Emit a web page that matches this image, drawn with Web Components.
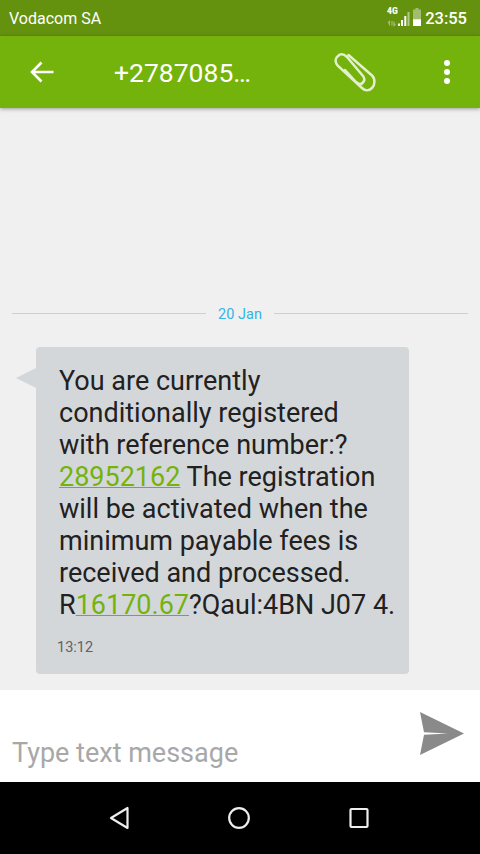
<!DOCTYPE html>
<html>
<head>
<meta charset="utf-8">
<style>
    html, body { margin: 0; padding: 0; height: 100%; }
    body { font-family: Roboto, "Liberation Sans", sans-serif; background: #f0f0f0; overflow: hidden; }
    sms-screen { height: 854px; }
</style>
</head>
<body>
<sms-screen>
    <status-bar slot="status" carrier="Vodacom SA" time="23:55"></status-bar>
    <sms-toolbar slot="toolbar" title="+2787085…"></sms-toolbar>
    <date-divider>20 Jan</date-divider>
    <sms-bubble time="13:12">You are currently<br>conditionally registered<br>with reference number:?<br><a>28952162</a> The registration<br>will be activated when the<br>minimum payable fees is<br>received and processed.<br>R<a>16170.67</a>?Qaul:4BN J07 4.</sms-bubble>
    <sms-composer slot="composer" placeholder="Type text message"></sms-composer>
    <nav-bar slot="nav"></nav-bar>
</sms-screen>
<script>
(() => {

    const make = (name, html, init) => {
        const template = document.createElement('template');
        template.innerHTML = html;
        window.customElements.define(name, class extends HTMLElement {
            constructor() {
                super();
                this.attachShadow({mode: 'open'});
                this.shadowRoot.appendChild(template.content.cloneNode(true));
            }
            connectedCallback() {
                if (init) init(this, this.shadowRoot);
            }
        });
    };

    make('sms-screen', `
        <style>
            :host { display: flex; flex-direction: column; width: 480px; }
            main {
                flex: 1;
                min-height: 0;
                display: flex;
                flex-direction: column;
                justify-content: flex-end;
                padding-bottom: 16px;
                background: #f0f0f0;
            }
        </style>
        <slot name="status"></slot>
        <slot name="toolbar"></slot>
        <main><slot></slot></main>
        <slot name="composer"></slot>
        <slot name="nav"></slot>
    `);

    make('status-bar', `
        <style>
            :host {
                display: flex;
                align-items: center;
                justify-content: space-between;
                height: 36px;
                padding: 0 13px 0 9px;
                box-sizing: border-box;
                background: #64920f;
                color: #fff;
                font-size: 16px;
            }
            .right { display: flex; align-items: center; gap: 3px; }
            .time { font-size: 16.5px; font-weight: 500; }
            svg { display: block; }
        </style>
        <span id="carrier"></span>
        <div class="right">
            <svg width="36" height="22" viewBox="0 0 36 22">
                <text x="1" y="7" font-family="Roboto" font-size="8.5" font-weight="900" fill="#fff">4G</text>
                <path d="M3.5 18.500v-4l-1.500 1.500M6 14v4.500M8 14.500v4l1.500-1.500" fill="none" stroke="#fff" stroke-opacity=".4" stroke-width="1.200"/>
                <rect x="12" y="16.500" width="2" height="2.500" fill="#fff"/>
                <rect x="15" y="13" width="2" height="6" fill="#fff"/>
                <rect x="18.300" y="9" width="2" height="10" fill="#fff"/>
                <rect x="21.500" y="5" width="2" height="14" fill="#fff" fill-opacity=".5"/>
                <path d="M27 2.500h2.500V1h3v1.500H35V19h-8z" fill="#fff" fill-opacity=".4"/>
                <rect x="27" y="12.300" width="8" height="6.700" fill="#fff"/>
            </svg>
            <span class="time" id="time"></span>
        </div>
    `, (el, root) => {
        root.querySelector('#carrier').textContent = el.getAttribute('carrier');
        root.querySelector('#time').textContent = el.getAttribute('time');
    });

    make('sms-toolbar', `
        <style>
            :host {
                display: flex;
                align-items: center;
                position: relative;
                z-index: 1;
                height: 72px;
                background: #74b20c;
                color: #fff;
                box-shadow: 0 1px 4px rgba(0,0,0,.35);
            }
            svg { display: block; flex: none; }
            .back { margin-left: 29px; }
            h1 {
                margin: 0 0 0 59px;
                width: 216px;
                font-size: 26.5px;
                font-weight: 400;
                white-space: nowrap;
            }
            .more { margin-left: 63px; }
        </style>
        <svg class="back" width="26" height="24" viewBox="0 0 26 24">
            <path d="M24.500 12H3M12.500 2.500L3 12l9.500 9.500" fill="none" stroke="#fff" stroke-width="2.600"/>
        </svg>
        <h1 id="title"></h1>
        <svg class="clip" width="50" height="48" viewBox="0 0 50 48">
            <path d="M18.500 7L42 27.500C45.500 31 45 37 42 40C39 43 35 43 32 40L8 18C4.500 14 5 10 8 8C11 5 14 6 17 9L33 28C35 30.500 34.500 33 32.500 35C30.500 37 28 36 26 34L15 22"
                  fill="none" stroke="#e3efcd" stroke-width="2.500" stroke-linecap="round"/>
        </svg>
        <svg class="more" width="8" height="26" viewBox="0 0 8 26">
            <circle cx="4" cy="4" r="3" fill="#fff"/>
            <circle cx="4" cy="13" r="3" fill="#fff"/>
            <circle cx="4" cy="22" r="3" fill="#fff"/>
        </svg>
    `, (el, root) => {
        root.querySelector('#title').textContent = el.getAttribute('title');
    });

    make('date-divider', `
        <style>
            :host {
                display: flex;
                align-items: center;
                gap: 12px;
                margin: 0 12px 25px;
                height: 18px;
                color: #33b5e5;
                font-size: 14.5px;
            }
            span { padding-top: 3px; }
            i { flex: 1; height: 1px; background: #cfcfcf; }
        </style>
        <i></i><span><slot></slot></span><i></i>
    `);

    make('sms-bubble', `
        <style>
            :host {
                display: block;
                position: relative;
                margin-left: 36px;
                width: 373px;
                height: 327px;
                box-sizing: border-box;
                padding: 18px 0 0 23px;
                background: #d4d7da;
                border-radius: 4px;
                color: #212121;
                font-size: 27px;
                line-height: 32px;
            }
            :host::before {
                content: "";
                position: absolute;
                left: -20px;
                top: 21px;
                border-style: solid;
                border-width: 10px 20px 10px 0;
                border-color: transparent #d4d7da transparent transparent;
            }
            ::slotted(a) { color: #74b20c; text-decoration: underline; text-decoration-thickness: 1px; }
            .text { width: 345px; }
            .time { margin: 17px 0 0 -2px; font-size: 14.5px; line-height: 20px; color: #616161; }
        </style>
        <div class="text"><slot></slot></div>
        <div class="time" id="time"></div>
    `, (el, root) => {
        root.querySelector('#time').textContent = el.getAttribute('time');
    });

    make('sms-composer', `
        <style>
            :host {
                display: flex;
                justify-content: space-between;
                height: 92px;
                box-sizing: border-box;
                padding: 22px 16px 0 12px;
                background: #fff;
            }
            span { margin-top: 25px; font-size: 27px; line-height: 32px; color: #a8a8a8; }
            svg { display: block; }
        </style>
        <span id="hint"></span>
        <svg width="44" height="44" viewBox="0 0 44 44">
            <path d="M0 0L44 21.500 0 43 4 22.800 28 21.500 4 20.200z" fill="#8a8a8a"/>
        </svg>
    `, (el, root) => {
        root.querySelector('#hint').textContent = el.getAttribute('placeholder');
    });

    make('nav-bar', `
        <style>
            :host {
                display: flex;
                align-items: center;
                justify-content: center;
                gap: 99px;
                height: 72px;
                padding-right: 2px;
                background: #000;
            }
            svg { display: block; }
        </style>
        <svg width="20" height="24" viewBox="0 0 20 24"><path d="M18.500 2v20L2 12z" fill="none" stroke="#eee" stroke-width="2.200" stroke-linejoin="round"/></svg>
        <svg width="22" height="24" viewBox="0 0 22 24"><circle cx="11" cy="12" r="9.800" fill="none" stroke="#eee" stroke-width="2.200"/></svg>
        <svg width="20" height="24" viewBox="0 0 20 24"><rect x="1.500" y="3" width="17" height="18" rx="1" fill="none" stroke="#eee" stroke-width="2.200"/></svg>
    `);

})();
</script>
</body>
</html>
